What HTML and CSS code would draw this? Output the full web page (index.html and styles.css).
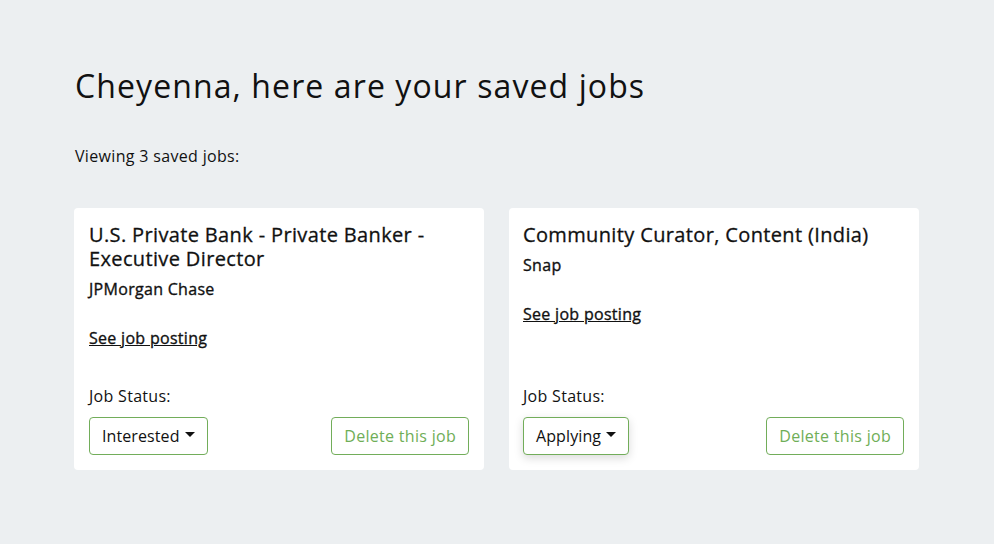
FILE: index.html
```html
<!DOCTYPE html>
<html>
<head>
<meta charset="utf-8">
<link rel="stylesheet" href="styles.css">
</head>
<body>
<main class="page">
  <h1 class="title">Cheyenna, here are your saved jobs</h1>
  <p class="count">Viewing 3 saved jobs:</p>
  <div class="grid">
    <div class="card">
      <div class="top">
        <h2 class="job">U.S. Private Bank - Private Banker - Executive Director</h2>
        <div class="company">JPMorgan Chase</div>
        <a class="link" href="#">See job posting</a>
      </div>
      <div class="bottom">
        <div class="status">Job Status:</div>
        <div class="actions">
          <button class="select">Interested<span class="caret"></span></button>
          <button class="delete">Delete this job</button>
        </div>
      </div>
    </div>
    <div class="card">
      <div class="top">
        <h2 class="job">Community Curator, Content (India)</h2>
        <div class="company">Snap</div>
        <a class="link" href="#">See job posting</a>
      </div>
      <div class="bottom">
        <div class="status">Job Status:</div>
        <div class="actions">
          <button class="select focused">Applying<span class="caret"></span></button>
          <button class="delete">Delete this job</button>
        </div>
      </div>
    </div>
  </div>
</main>
</body>
</html>
```
FILE: styles.css
```css
html, body {
  margin: 0;
  padding: 0;
  background: #eceff1;
}
body {
  font-family: "Open Sans", "Liberation Sans", sans-serif;
  color: #111;
  letter-spacing: 0.3px;
}
.page {
  padding: 66px 75px 0 74px;
}
.title {
  margin: 0 0 0 1px;
  font-size: 32px;
  font-weight: 400;
  line-height: 40px;
  letter-spacing: 1.1px;
}
.count {
  margin: 39px 0 0 1px;
  font-size: 16px;
  line-height: 22px;
  letter-spacing: 0.33px;
}
.grid {
  margin-top: 41px;
  display: grid;
  grid-template-columns: 410px 410px;
  gap: 25px;
}
.card {
  background: #fff;
  border-radius: 4px;
  padding: 15px 15px 15px 14px;
  display: flex;
  flex-direction: column;
  justify-content: space-between;
  min-height: 232px;
}
.card:first-child {
  padding-left: 15px;
}
.job {
  margin: 0;
  font-size: 20px;
  font-weight: 400;
  line-height: 24px;
  letter-spacing: 0.36px;
  -webkit-text-stroke: 0.3px #111;
}
.company {
  margin-top: 7px;
  font-size: 16px;
  font-weight: 400;
  line-height: 22px;
  -webkit-text-stroke: 0.35px #111;
}
.link {
  display: inline-block;
  margin-top: 27px;
  font-size: 16px;
  font-weight: 400;
  line-height: 22px;
  color: #111;
  text-decoration: underline;
  -webkit-text-stroke: 0.35px #111;
}
.status {
  font-size: 16px;
  line-height: 22px;
  margin-bottom: 10px;
}
.actions {
  display: flex;
  justify-content: space-between;
}
button {
  font-family: inherit;
  font-size: 16px;
  letter-spacing: 0.3px;
  height: 38px;
  border: 1.5px solid #72ad5a;
  border-radius: 4px;
  background: #fff;
  padding: 0 12px;
  cursor: pointer;
}
.select {
  color: #111;
  letter-spacing: 0.1px;
  display: flex;
  align-items: center;
}
.select.focused {
  box-shadow: 0 3px 10px rgba(0,0,0,0.15);
}
.caret {
  display: inline-block;
  margin-left: 5px;
  width: 0;
  height: 0;
  border-left: 5px solid transparent;
  border-right: 5px solid transparent;
  border-top: 5px solid #111;
  transform: translateY(-2px);
}
.delete {
  color: #6fae57;
}
```
